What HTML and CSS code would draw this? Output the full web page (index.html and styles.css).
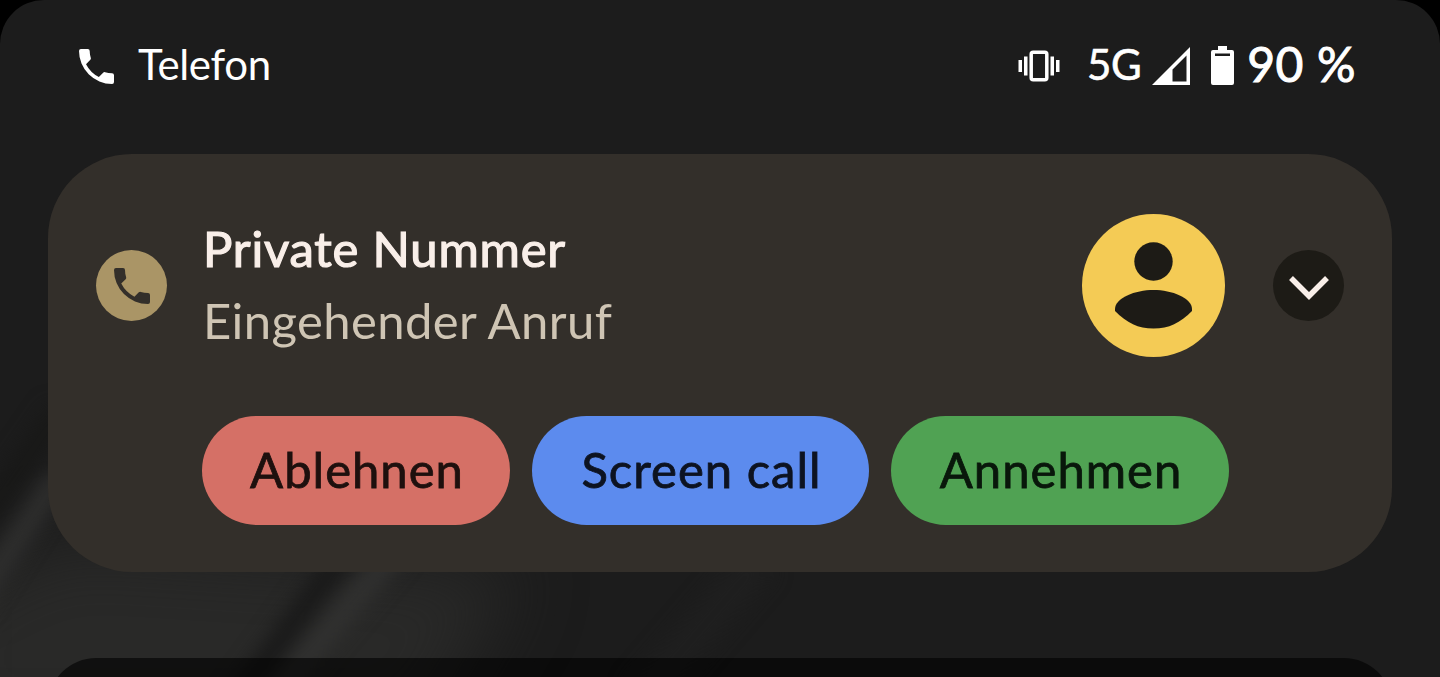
FILE: index.html
```
<!DOCTYPE html>
<html lang="de">
<head>
    <meta charset="UTF-8">
    <meta name="viewport" content="width=device-width, initial-scale=1.0">
    <title>Eingehender Anruf</title>
    <link rel="stylesheet" href="styles.css">
</head>
<body>

<div class="screen">
    <svg class="wallpaper" viewBox="0 0 1440 677" aria-hidden="true">
        <defs>
            <filter id="soft" x="-50%" y="-50%" width="200%" height="200%" color-interpolation-filters="sRGB"><feGaussianBlur stdDeviation="10"/></filter>
            <filter id="wide" x="-50%" y="-50%" width="200%" height="200%" color-interpolation-filters="sRGB"><feGaussianBlur stdDeviation="35"/></filter>
        </defs>
        <path d="M-60 600 L60 540 L520 570 L420 740 L-60 740Z" fill="#292928" filter="url(#wide)"/>
        <g fill="none" filter="url(#soft)">
            <path d="M-30 540 L60 410" stroke="#181817" stroke-width="22"/>
            <path d="M-30 610 L60 475" stroke="#30302f" stroke-width="22"/>
            <path d="M230 710 L350 545" stroke="#181818" stroke-width="22"/>
            <path d="M262 710 L400 545" stroke="#323231" stroke-width="22"/>
            <path d="M640 700 L760 560" stroke="#1f1f1f" stroke-width="36"/>
        </g>
    </svg>

    <div class="status-bar">
        <svg class="status-phone" viewBox="3 3 18 18"><path d="M6.620 10.790a15.150 15.150 0 0 0 6.590 6.590l2.200-2.200a1 1 0 0 1 1.020-.24c1.120.370 2.320.570 3.570.570a1 1 0 0 1 1 1V20a1 1 0 0 1-1 1A17 17 0 0 1 3 4a1 1 0 0 1 1-1h3.500a1 1 0 0 1 1 1c0 1.250.2 2.450.57 3.570a1 1 0 0 1-.25 1.020z"/></svg>
        <span class="app-name">Telefon</span>
        <div class="status-icons">
            <svg class="vibrate" viewBox="0 0 42 32">
                <path d="M.5 10h3.500v12H.5zM6 6.500h3.500v19H6zM32.500 6.500H36v19h-3.500zM38 10h3.500v12H38z"/>
                <rect x="13.200" y="2.300" width="15.600" height="27.400" rx="2"/>
            </svg>
            <span class="network">5G</span>
            <svg class="signal" viewBox="0 0 38 38"><path fill-rule="evenodd" d="M38 0V38H0zM34.500 8.500L20.500 22.500V34.500H34.500z"/></svg>
            <svg class="battery" viewBox="0 0 23 39"><path fill-rule="evenodd" d="M7 0h9v4h5a2 2 0 0 1 2 2v31a2 2 0 0 1-2 2H2a2 2 0 0 1-2-2V6a2 2 0 0 1 2-2h5zM4 7.500v2.500h15V7.500z"/></svg>
            <span class="percent">90 %</span>
        </div>
    </div>

    <div class="notification">
        <div class="caller">
            <div class="call-icon">
                <svg viewBox="3 3 18 18"><path d="M6.620 10.790a15.150 15.150 0 0 0 6.590 6.590l2.200-2.200a1 1 0 0 1 1.020-.24c1.120.370 2.320.570 3.570.570a1 1 0 0 1 1 1V20a1 1 0 0 1-1 1A17 17 0 0 1 3 4a1 1 0 0 1 1-1h3.500a1 1 0 0 1 1 1c0 1.250.2 2.450.57 3.570a1 1 0 0 1-.25 1.020z"/></svg>
            </div>
            <div class="info">
                <span class="title">Private Nummer</span>
                <span class="subtitle">Eingehender Anruf</span>
            </div>
            <svg class="avatar" viewBox="0 0 143 143">
                <circle class="avatar-bg" cx="71.500" cy="71.500" r="71.500"/>
                <circle cx="71.500" cy="47.500" r="19.200"/>
                <path d="M33 95C33 84 53 76 71.500 76S110 84 110 95V97C98 109 87 114.500 71.500 114.500S45 109 33 97z"/>
            </svg>
            <button class="expand" aria-label="Maximieren">
                <svg viewBox="0 0 40 24"><path d="M2 2l18 18L38 2"/></svg>
            </button>
        </div>
        <div class="actions">
            <button class="decline">Ablehnen</button>
            <button class="screen-call">Screen call</button>
            <button class="accept">Annehmen</button>
        </div>
    </div>

    <div class="next-card"></div>
</div>

</body>
</html>
```
FILE: styles.css
```
* {
    box-sizing: border-box;
}
body {
    margin: 0;
    background-color: #000;
    font-family: Lato, "Open Sans", sans-serif;
}
.screen {
    position: relative;
    height: 677px;
    overflow: hidden;
    border-radius: 44px 44px 0 0;
    background-color: #1c1c1c;
    display: flex;
    flex-direction: column;
}
.wallpaper {
    position: absolute;
    inset: 0;
    width: 100%;
    height: 100%;
}
.status-bar {
    position: relative;
    flex: none;
    height: 154px;
    padding: 0 84px 23px 79px;
    display: flex;
    align-items: center;
    color: #fff;
    fill: #fff;
}
.status-bar span {
    padding-bottom: 4px;
}
.status-phone {
    width: 35px;
    height: 35px;
    margin-top: 2px;
}
.app-name {
    margin-left: 24px;
    font-size: 42px;
    letter-spacing: -0.3px;
}
.status-icons {
    margin-left: auto;
    display: flex;
    align-items: center;
}
.vibrate {
    width: 42px;
    height: 32px;
}
.vibrate rect {
    fill: none;
    stroke: #fff;
    stroke-width: 3.5;
}
.network {
    margin-left: 27px;
    font-size: 42px;
    letter-spacing: -0.5px;
    -webkit-text-stroke: 0.6px;
}
.signal {
    width: 38px;
    height: 38px;
    margin-left: 11px;
}
.battery {
    width: 23px;
    height: 39px;
    margin-left: 21px;
}
.percent {
    margin-left: 13px;
    font-size: 48px;
    letter-spacing: 0.6px;
    -webkit-text-stroke: 1px;
}
.notification {
    position: relative;
    flex: none;
    height: 418px;
    margin: 0 48px;
    padding: 60px 48px 47px;
    border-radius: 84px;
    background-color: #332f2a;
}
.caller {
    display: flex;
    align-items: center;
    height: 143px;
}
.call-icon {
    width: 71px;
    height: 71px;
    border-radius: 50%;
    background-color: #aa9566;
    display: flex;
    align-items: center;
    justify-content: center;
}
.call-icon svg {
    width: 36px;
    height: 36px;
    fill: #332f2a;
}
.info {
    margin-left: 36px;
    padding-bottom: 4px;
    display: flex;
    flex-direction: column;
    font-size: 49px;
    line-height: 72px;
    white-space: nowrap;
}
.title {
    color: #f9efe9;
    letter-spacing: 0.8px;
    -webkit-text-stroke: 1.2px;
}
.subtitle {
    color: #cfc5b4;
    letter-spacing: 0.4px;
}
.avatar {
    width: 143px;
    height: 143px;
    margin-left: auto;
    fill: #1d1b16;
}
.avatar-bg {
    fill: #f4cb55;
}
button {
    border: none;
    padding: 0;
    font-family: inherit;
    cursor: pointer;
}
.expand {
    width: 71px;
    height: 71px;
    margin-left: 48px;
    border-radius: 50%;
    background-color: #1d1b16;
    display: flex;
    align-items: center;
    justify-content: center;
}
.expand svg {
    width: 40px;
    height: 24px;
    margin-top: 5px;
    fill: none;
    stroke: #f9efe9;
    stroke-width: 5.5;
}
.actions {
    display: flex;
    gap: 22px;
    margin: 59px 0 0 106px;
}
.actions button {
    height: 109px;
    padding: 0 0 4px 2px;
    border-radius: 55px;
    font-size: 49px;
    letter-spacing: 1px;
    -webkit-text-stroke: 0.8px;
    white-space: nowrap;
}
.actions .decline {
    width: 308px;
    background-color: #d57066;
    color: #1e100e;
}
.actions .screen-call {
    width: 337px;
    background-color: #5c8bee;
    color: #0d1321;
}
.actions .accept {
    width: 338px;
    background-color: #50a253;
    color: #09170b;
}
.next-card {
    position: relative;
    flex: none;
    height: 200px;
    margin: 86px 48px 0;
    border-radius: 48px;
    background-color: rgba(0, 0, 0, 0.6);
}
```
